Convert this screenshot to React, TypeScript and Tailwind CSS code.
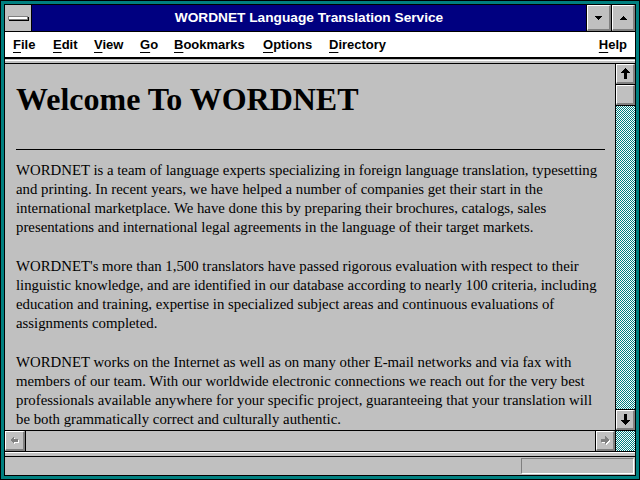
import React from "react";

const bevel =
  "bg-[#c0c0c0] border-t border-l border-t-white border-l-white border-b-2 border-r-2 border-b-[#808080] border-r-[#808080]";

function Checker({ id }: { id: string }) {
  return (
    <svg width="100%" height="100%" shapeRendering="crispEdges" className="block">
      <defs>
        <pattern id={id} width="2" height="2" patternUnits="userSpaceOnUse">
          <rect x="0" y="0" width="2" height="2" fill="#ffffff" />
          <rect x="0" y="0" width="1" height="1" fill="#008080" />
          <rect x="1" y="1" width="1" height="1" fill="#008080" />
        </pattern>
      </defs>
      <rect width="100%" height="100%" fill={`url(#${id})`} />
    </svg>
  );
}

function Tri({ up }: { up?: boolean }) {
  return (
    <svg width="7" height="4" viewBox="0 0 7 4" shapeRendering="crispEdges">
      <polygon points={up ? "3.5,0 7,4 0,4" : "0,0 7,0 3.5,4"} fill="#000" />
    </svg>
  );
}

function VArrow({ down }: { down?: boolean }) {
  return (
    <svg width="9" height="11" viewBox="0 0 9 11" shapeRendering="crispEdges">
      <polygon
        points={down ? "3,0 6,0 6,6 9,6 4.5,11 0,6 3,6" : "4.5,0 9,5 6,5 6,11 3,11 3,5 0,5"}
        fill="#000"
      />
    </svg>
  );
}

function HArrow({ right }: { right?: boolean }) {
  const pts = right
    ? "0,2.5 4,2.5 4,0 8,4 4,8 4,5.5 0,5.5"
    : "8,2.5 4,2.5 4,0 0,4 4,8 4,5.5 8,5.5";
  return (
    <svg width="9" height="9" viewBox="0 0 9 9" shapeRendering="crispEdges">
      <g transform="translate(1,1)">
        <polygon points={pts} fill="#ffffff" />
      </g>
      <polygon points={pts} fill="#808080" />
    </svg>
  );
}

function MenuItem({ first, rest, w }: { first: string; rest: string; w?: string }) {
  return (
    <div className={w ?? ""}>
      <span className="underline underline-offset-[3px] decoration-1">{first}</span>
      {rest}
    </div>
  );
}

export default function App() {
  return (
    <div className="w-[640px] h-[480px] bg-black p-px overflow-hidden">
      <div className="w-full h-full bg-[#008080] p-[3px]">
        <div className="w-full h-full bg-black p-px">
          <div className="w-full h-full flex flex-col bg-[#c0c0c0]">
            {/* Title bar */}
            <div className="h-[27px] flex border-b border-black shrink-0">
              <div className="w-[27px] border-r border-black bg-[#c0c0c0] flex items-center justify-center">
                <div className="w-[20px] h-[4px] bg-white border border-[#808080] shadow-[1px_1px_0_#000]" />
              </div>
              <div className="flex-1 bg-[#000080] flex items-center justify-center text-white font-bold text-[13.7px] font-['Liberation_Sans',Arial,sans-serif]">
                WORDNET Language Translation Service
              </div>
              <div className="w-[25px] border-l border-black">
                <div className={`${bevel} w-full h-full flex items-center justify-center`}>
                  <Tri />
                </div>
              </div>
              <div className="w-[24px] border-l border-black">
                <div className={`${bevel} w-full h-full flex items-center justify-center`}>
                  <Tri up />
                </div>
              </div>
            </div>

            {/* Menu bar */}
            <div className="h-[27px] bg-white border-b-2 border-black flex items-center pl-[8px] pr-[8px] text-[13px] font-bold text-black font-['Liberation_Sans',Arial,sans-serif] shrink-0">
              <MenuItem first="F" rest="ile" w="w-[40px]" />
              <MenuItem first="E" rest="dit" w="w-[41px]" />
              <MenuItem first="V" rest="iew" w="w-[46px]" />
              <MenuItem first="G" rest="o" w="w-[34px]" />
              <MenuItem first="B" rest="ookmarks" w="w-[89px]" />
              <MenuItem first="O" rest="ptions" w="w-[66px]" />
              <MenuItem first="D" rest="irectory" w="flex-1" />
              <MenuItem first="H" rest="elp" />
            </div>

            {/* separator */}
            <div className="h-px bg-[#c0c0c0] shrink-0" />
            <div className="h-px bg-white shrink-0" />
            <div className="h-[2px] bg-[#c0c0c0] shrink-0" />
            <div className="h-px bg-black shrink-0" />

            {/* Main */}
            <div className="h-[367px] flex shrink-0">
              <div className="w-[610px] border-b border-black bg-[#c0c0c0] overflow-hidden pl-[11px] pr-[10px] pt-[17px] font-['Liberation_Serif','Times_New_Roman',serif] text-black">
                <h1 className="text-[32px] leading-[36px] font-bold whitespace-nowrap">
                  Welcome To WORDNET
                </h1>
                <div className="mt-[32px] h-px bg-black" />
                <div className="mt-[11px] text-[14.8px] leading-[19px] whitespace-nowrap">
                  <p>
                    WORDNET is a team of language experts specializing in foreign language translation, typesetting
                    <br />
                    and printing. In recent years, we have helped a number of companies get their start in the
                    <br />
                    international marketplace. We have done this by preparing their brochures, catalogs, sales
                    <br />
                    presentations and international legal agreements in the language of their target markets.
                  </p>
                  <p className="mt-[20px]">
                    WORDNET's more than 1,500 translators have passed rigorous evaluation with respect to their
                    <br />
                    linguistic knowledge, and are identified in our database according to nearly 100 criteria, including
                    <br />
                    education and training, expertise in specialized subject areas and continuous evaluations of
                    <br />
                    assignments completed.
                  </p>
                  <p className="mt-[20px]">
                    WORDNET works on the Internet as well as on many other E-mail networks and via fax with
                    <br />
                    members of our team. With our worldwide electronic connections we reach out for the very best
                    <br />
                    professionals available anywhere for your specific project, guaranteeing that your translation will
                    <br />
                    be both grammatically correct and culturally authentic.
                  </p>
                </div>
              </div>
              <div className="w-px bg-black" />
              <div className="flex-1 flex flex-col border-b border-black">
                <div className={`${bevel} h-[20px] flex items-center justify-center`}>
                  <VArrow />
                </div>
                <div className="h-px bg-black" />
                <div className={`${bevel} h-[20px]`} />
                <div className="h-px bg-black" />
                <div className="flex-1 overflow-hidden">
                  <Checker id="vtrack" />
                </div>
                <div className="h-px bg-black" />
                <div className={`${bevel} h-[20px] flex items-center justify-center`}>
                  <VArrow down />
                </div>
              </div>
            </div>

            {/* Horizontal scrollbar */}
            <div className="h-[20px] flex shrink-0">
              <div className={`${bevel} w-[20px] flex items-center justify-center`}>
                <HArrow />
              </div>
              <div className="w-px bg-black" />
              <div className="flex-1 bg-[#c0c0c0]" />
              <div className="w-px bg-black" />
              <div className={`${bevel} w-[19px] flex items-center justify-center`}>
                <HArrow right />
              </div>
              <div className="w-px bg-black" />
              <div className="w-[19px] overflow-hidden">
                <Checker id="corner" />
              </div>
            </div>

            {/* separator */}
            <div className="h-px bg-black shrink-0" />
            <div className="h-px bg-white shrink-0" />
            <div className="h-[3px] bg-[#c0c0c0] shrink-0" />
            <div className="h-px bg-black shrink-0" />

            {/* Status bar */}
            <div className="flex-1 flex justify-end items-start pt-px pr-px bg-[#c0c0c0]">
              <div className="w-[113px] h-[16px] border-t border-l border-[#808080] border-b border-r border-b-white border-r-white" />
            </div>
          </div>
        </div>
      </div>
    </div>
  );
}
